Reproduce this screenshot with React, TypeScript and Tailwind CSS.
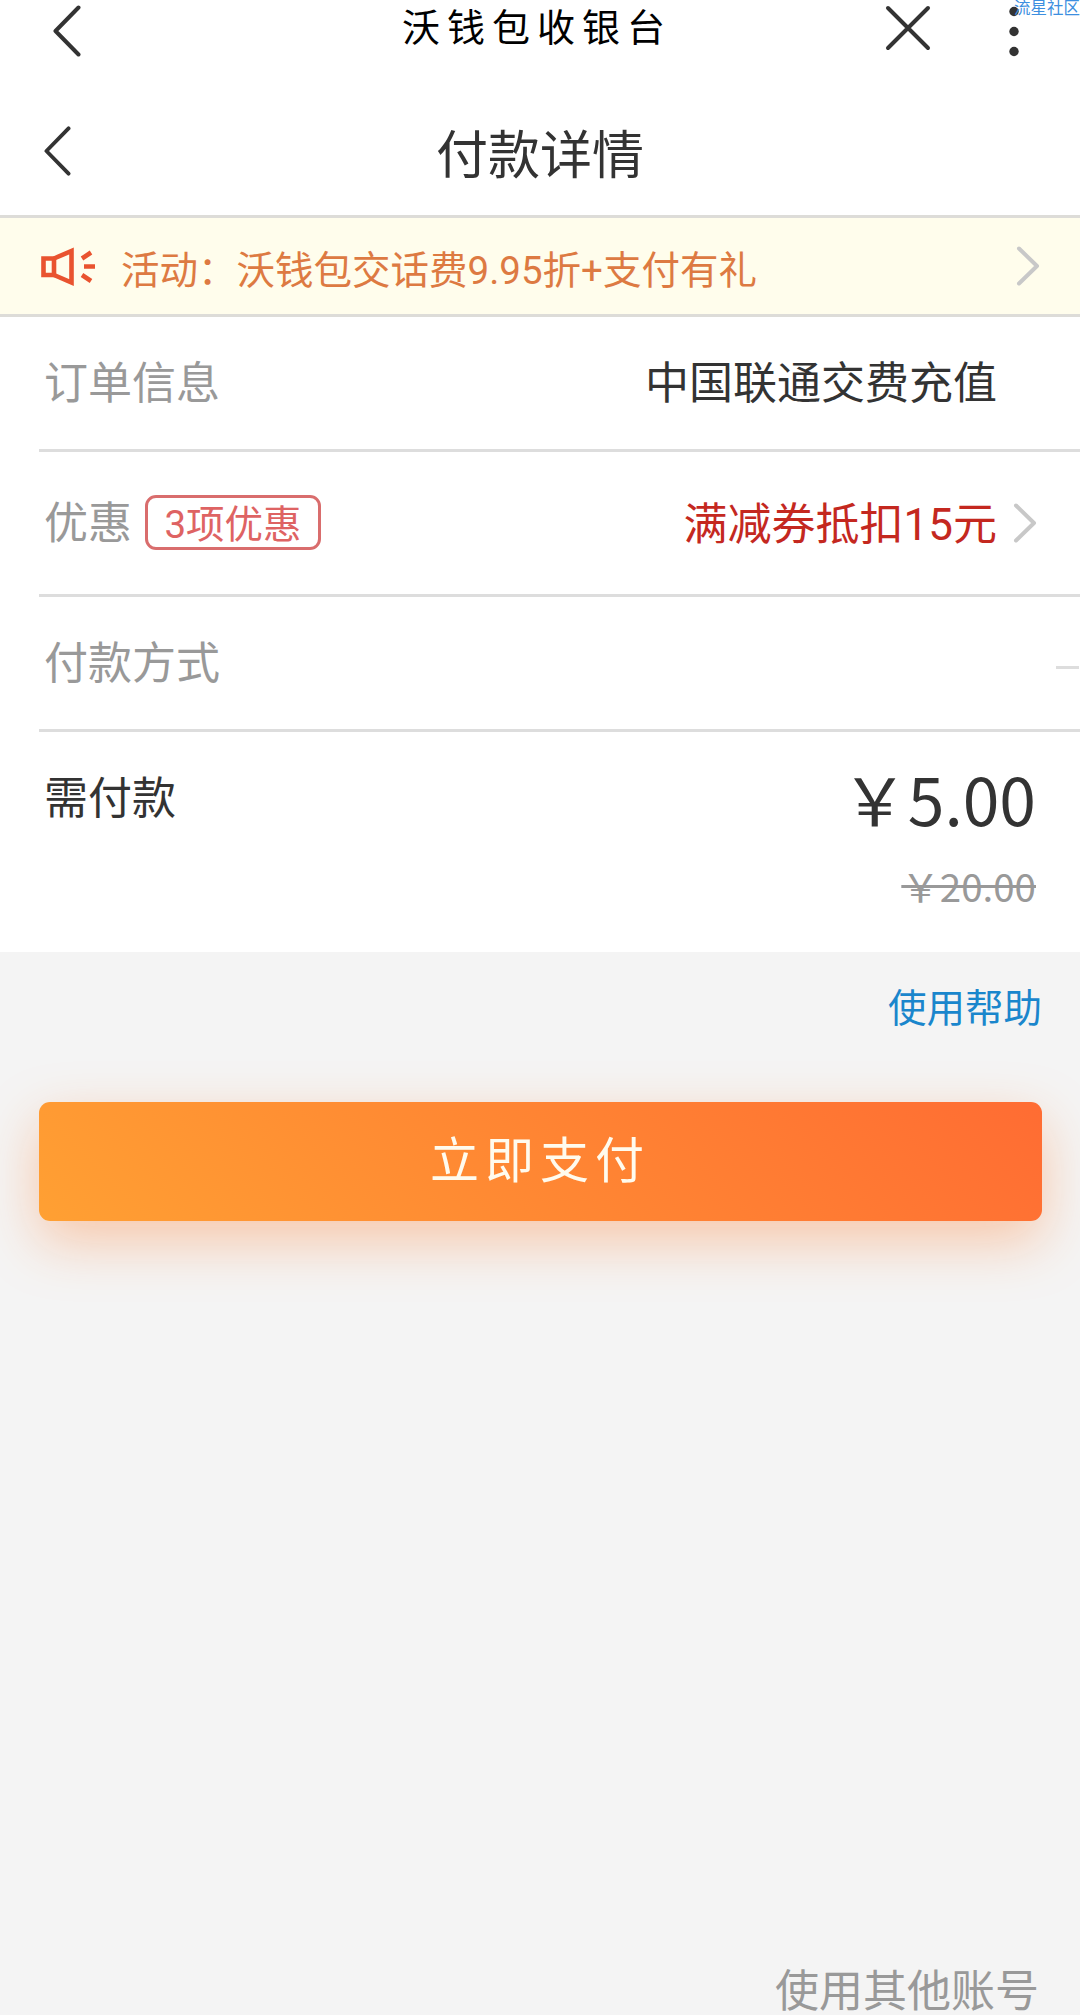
import type { ReactNode } from "react";

interface RowProps {
  label: string;
  className?: string;
  badge?: string;
  children?: ReactNode;
}

function BackIcon({ className }: { className?: string }) {
  return (
    <svg viewBox="0 0 28 52" fill="none" stroke="#333" strokeWidth="4" strokeLinecap="round" strokeLinejoin="round" className={className}>
      <path d="M25.5 2.5 2.5 26l23 23.5" />
    </svg>
  );
}

function ArrowIcon({ className }: { className?: string }) {
  return (
    <svg width="24" height="40" viewBox="0 0 24 40" fill="none" stroke="#c8c8c8" strokeWidth="4" strokeLinecap="round" strokeLinejoin="round" className={className}>
      <path d="M3 2.500l18 17.500L3 37.500" />
    </svg>
  );
}

function SpeakerIcon() {
  return (
    <svg width="56" height="40" viewBox="0 0 56 40" fill="none" stroke="#e9532f" strokeWidth="4.6" className="shrink-0">
      <path d="M3.500 12.500h10.500v16.500h-10.500z" />
      <path d="M14 12.500 31.500 5v31.500l-17.500-7.500" />
      <path d="M42 12.500l9-6M44 20.500h11M42 29l9 6" />
    </svg>
  );
}

function Row({ label, badge, className, children }: RowProps) {
  return (
    <div className={`ml-[39px] flex items-center justify-between border-b-3 border-[#ddd] pl-[5px] ${className}`}>
      <div className="flex items-center">
        <span className="mt-px text-[44px] text-[#999]">{label}</span>
        {badge && (
          <span className="mb-px ml-[13px] flex h-[55px] w-[176px] items-center justify-center rounded-[11px] border-3 border-[#d96d6d] pt-[5px] text-[38.5px] text-[#de6363]">
            {badge}
          </span>
        )}
      </div>
      {children}
    </div>
  );
}

export default function App() {
  return (
    <div className="relative flex h-[2015px] w-[1080px] flex-col overflow-hidden bg-[#f4f4f4] font-[Roboto,'Noto_Sans_CJK_SC',sans-serif] leading-none whitespace-nowrap text-[#333]">
      <header className="flex h-[75px] items-start bg-white pr-[61px] pl-[53px]">
        <BackIcon className="mt-[5px] h-[52px] w-7" />
        <h1 className="mt-[9px] ml-[321px] text-[38px] tracking-[7px] text-black">沃钱包收银台</h1>
        <div className="ml-auto flex items-start gap-[78px]">
          <svg width="46" height="46" viewBox="0 0 46 46" fill="none" stroke="#333" strokeWidth="4" strokeLinecap="round" className="mt-[5px]">
            <path d="M3 3l40 40M43 3 3 43" />
          </svg>
          <svg width="10" height="56" viewBox="0 0 10 56" fill="#333" className="mt-1">
            <circle cx="5" cy="7.5" r="4.7" />
            <circle cx="5" cy="27.5" r="4.7" />
            <circle cx="5" cy="47.5" r="4.7" />
          </svg>
        </div>
      </header>
      <span className="absolute top-0 left-[1014px] text-[16.5px] leading-[18px] text-[#3d8fe0]">流星社区</span>

      <div className="grid h-[140px] grid-cols-[70px_1fr_70px] items-center bg-white">
        <BackIcon className="ml-11 mt-[12px] h-[50px] w-[27px]" />
        <h2 className="mt-[23px] text-center text-[52px]">付款详情</h2>
      </div>

      <div className="flex h-[102px] items-center border-y-3 border-[#dddcd8] bg-[#fffdec] pr-[40px] pl-10">
        <SpeakerIcon />
        <span className="mt-2.5 ml-[25px] flex-1 text-[38.5px] text-[#dd7a42]">活动：沃钱包交话费9.95折+支付有礼</span>
        <ArrowIcon />
      </div>

      <section className="h-[635px] bg-white">
        <Row label="订单信息" className="h-[135px]">
          <span className="mt-px mr-[83px] text-[44px]">中国联通交费充值</span>
        </Row>
        <Row label="优惠" badge="3项优惠" className="h-[145px]">
          <div className="mr-[43px] flex items-center">
            <span className="mt-[3px] text-[44px] text-[#c4281f]">满减券抵扣15元</span>
            <ArrowIcon className="ml-4" />
          </div>
        </Row>
        <Row label="付款方式" className="h-[135px]">
          <i className="mt-2 mr-px h-[3px] w-[23px] bg-[#ddd]" />
        </Row>
        <div className="flex items-start justify-between px-11">
          <span className="mt-[45px] text-[44px]">需付款</span>
          <div className="flex flex-col items-end font-['Noto_Sans_CJK_SC',sans-serif]">
            <span className="mt-8 text-[66px]">￥5.00</span>
            <del className="mt-9 text-[38.5px] text-[#999]">￥20.00</del>
          </div>
        </div>
      </section>

      <a className="mt-[38px] mr-[38px] self-end text-[38.5px] text-[#1a86cc]">使用帮助</a>
      <button className="mx-[38.500px] mt-[73px] h-[119px] rounded-[11px] bg-[linear-gradient(45deg,#ffa033,#ff6c33)] text-[49px] tracking-[6px] text-[#fffbee] shadow-[0_20px_55px_rgba(255,120,35,0.36)]">
        立即支付
      </button>
      <a className="mt-auto mr-[41px] mb-px self-end text-[44px] text-[#999]">使用其他账号</a>
    </div>
  );
}
